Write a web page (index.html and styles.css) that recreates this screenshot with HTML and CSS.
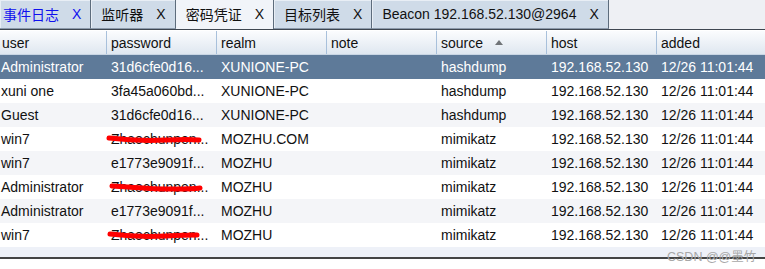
FILE: index.html
```html
<!DOCTYPE html>
<html lang="zh">
<head>
    <meta charset="UTF-8">
    <title>密码凭证</title>
    <link rel="stylesheet" href="styles.css">
</head>
<body>
    <div class="tabbar">
        <div class="tab tab-first tab-alert"><span>事件日志</span><span class="close">X</span></div>
        <div class="tab"><span>监听器</span><span class="close">X</span></div>
        <div class="tab tab-active"><span>密码凭证</span><span class="close">X</span></div>
        <div class="tab"><span>目标列表</span><span class="close">X</span></div>
        <div class="tab"><span>Beacon 192.168.52.130@2964</span><span class="close">X</span></div>
    </div>

    <div class="grid">
        <div class="row head">
            <div class="cell first">user</div>
            <div class="cell">password</div>
            <div class="cell">realm</div>
            <div class="cell">note</div>
            <div class="cell">source <span class="sort"></span></div>
            <div class="cell">host</div>
            <div class="cell">added</div>
        </div>

        <div class="row selected">
            <div class="cell first">Administrator</div>
            <div class="cell">31d6cfe0d16...</div>
            <div class="cell">XUNIONE-PC</div>
            <div class="cell"></div>
            <div class="cell">hashdump</div>
            <div class="cell">192.168.52.130</div>
            <div class="cell">12/26 11:01:44</div>
        </div>
        <div class="row">
            <div class="cell first">xuni one</div>
            <div class="cell">3fa45a060bd...</div>
            <div class="cell">XUNIONE-PC</div>
            <div class="cell"></div>
            <div class="cell">hashdump</div>
            <div class="cell">192.168.52.130</div>
            <div class="cell">12/26 11:01:44</div>
        </div>
        <div class="row alt">
            <div class="cell first">Guest</div>
            <div class="cell">31d6cfe0d16...</div>
            <div class="cell">XUNIONE-PC</div>
            <div class="cell"></div>
            <div class="cell">hashdump</div>
            <div class="cell">192.168.52.130</div>
            <div class="cell">12/26 11:01:44</div>
        </div>
        <div class="row">
            <div class="cell first">win7</div>
            <div class="cell masked">Zhaochunpen...
                <svg class="scribble" width="100" height="14" viewBox="0 0 100 14"><path d="M3 5 C 20 7, 40 8, 60 7 S 85 6, 93 7" /></svg>
            </div>
            <div class="cell">MOZHU.COM</div>
            <div class="cell"></div>
            <div class="cell">mimikatz</div>
            <div class="cell">192.168.52.130</div>
            <div class="cell">12/26 11:01:44</div>
        </div>
        <div class="row alt">
            <div class="cell first">win7</div>
            <div class="cell">e1773e9091f...</div>
            <div class="cell">MOZHU</div>
            <div class="cell"></div>
            <div class="cell">mimikatz</div>
            <div class="cell">192.168.52.130</div>
            <div class="cell">12/26 11:01:44</div>
        </div>
        <div class="row">
            <div class="cell first">Administrator</div>
            <div class="cell masked">Zhaochunpen...
                <svg class="scribble" width="100" height="14" viewBox="0 0 100 14"><path d="M6 5 C 25 6, 45 8, 65 8 S 88 8, 94 7" /></svg>
            </div>
            <div class="cell">MOZHU</div>
            <div class="cell"></div>
            <div class="cell">mimikatz</div>
            <div class="cell">192.168.52.130</div>
            <div class="cell">12/26 11:01:44</div>
        </div>
        <div class="row alt">
            <div class="cell first">Administrator</div>
            <div class="cell">e1773e9091f...</div>
            <div class="cell">MOZHU</div>
            <div class="cell"></div>
            <div class="cell">mimikatz</div>
            <div class="cell">192.168.52.130</div>
            <div class="cell">12/26 11:01:44</div>
        </div>
        <div class="row">
            <div class="cell first">win7</div>
            <div class="cell masked">Zhaochunpen...
                <svg class="scribble" width="100" height="14" viewBox="0 0 100 14"><path d="M4 5 C 20 7, 40 8, 60 7 S 82 6, 91 6" /></svg>
            </div>
            <div class="cell">MOZHU</div>
            <div class="cell"></div>
            <div class="cell">mimikatz</div>
            <div class="cell">192.168.52.130</div>
            <div class="cell">12/26 11:01:44</div>
        </div>
        <div class="filler"></div>
    </div>

    <div class="watermark">CSDN @@墨竹</div>
</body>
</html>
```

FILE: styles.css
```css
body {
    margin: 0;
    width: 765px;
    height: 269px;
    overflow: hidden;
    background: #ffffff;
    font-family: "Liberation Sans", Arial, "Noto Sans CJK SC", sans-serif;
    font-size: 14px;
    color: #111111;
    position: relative;
}
.tabbar {
    display: flex;
    height: 29px;
    background: #eef0f4;
    border-bottom: 1px solid #3e4650;
}
.tab {
    display: flex;
    align-items: center;
    gap: 13px;
    padding: 0 9px 1px 10px;
    height: 27px;
    background: #cfdbe8;
    border-right: 1px solid #5d6c7c;
    border-bottom: 1px solid #8c9aab;
    box-shadow: inset 1px 1px 0 #e8eef5;
    color: #111111;
    white-space: nowrap;
}
.tab-first {
    padding-left: 3px;
}
.tab-alert {
    color: #1010ee;
}
.tab-active {
    background: #f1f4f9;
    height: 28px;
    border-bottom: none;
    box-shadow: none;
}
.close {
    font-size: 14px;
}
.grid {
    margin-top: 1px;
}
.row {
    display: grid;
    grid-template-columns: 107px repeat(6, 110px);
    height: 24px;
    line-height: 24px;
    background: #ffffff;
}
.row.alt {
    background: #f4f5f8;
}
.row.selected {
    background: #5e7a99;
    color: #ffffff;
}
.head {
    background: linear-gradient(#fbfcfe, #dfe7f0);
    border-bottom: 1px solid #c9d6e4;
    height: 23px;
    line-height: 24px;
}
.head .cell {
    border-right: 1px solid #a8c0db;
    padding-left: 4px;
}
.head .cell.first {
    padding-left: 2px;
}
.cell {
    position: relative;
    padding-left: 4px;
    white-space: nowrap;
    overflow: hidden;
}
.cell.first {
    padding-left: 1px;
}
.masked {
    overflow: visible;
}
.scribble {
    position: absolute;
    left: -1px;
    top: 6px;
}
.scribble path {
    fill: none;
    stroke: #ff0000;
    stroke-width: 5;
    stroke-linecap: round;
}
.sort {
    display: inline-block;
    width: 0;
    height: 0;
    margin-left: 8px;
    vertical-align: middle;
    border-left: 4px solid transparent;
    border-right: 4px solid transparent;
    border-bottom: 5px solid #707478;
    position: relative;
    top: -2px;
}
.filler {
    height: 10px;
    background: #eef1f8;
    border-bottom: 2px solid #444444;
}
.watermark {
    position: absolute;
    left: 667px;
    top: 246px;
    font-size: 12.5px;
    color: #a8a8a8;
    font-family: "Liberation Sans", "Noto Sans CJK SC", sans-serif;
}
```
